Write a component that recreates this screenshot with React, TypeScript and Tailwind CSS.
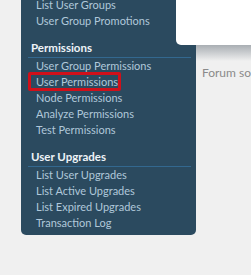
import React from "react";

const font = { fontFamily: 'Lato, "Noto Sans", sans-serif' };

function Item({ label, active }: { label: string; active?: boolean }) {
  return (
    <div className="h-[16px] leading-[16px] pl-[15px] text-[11px] text-[#b0c8da] whitespace-nowrap">
      <span className="relative">
        {active && (
          <span className="absolute left-[-8px] right-[-3px] top-[-3px] bottom-[-3px] border-[3px] border-[#d0101a] rounded-[2px]" />
        )}
        {label}
      </span>
    </div>
  );
}

function Header({ label }: { label: string }) {
  return (
    <div className="ml-[7px] mr-[5px] h-[19px] leading-[17px] pl-[3px] border-b border-[#33688f] text-[11.5px] font-bold text-[#eef3f7] whitespace-nowrap">
      {label}
    </div>
  );
}

export default function App() {
  return (
    <div className="relative w-[251px] h-[275px] bg-[#f0f0f0] overflow-hidden" style={font}>
      <div className="flex">
        <div className="ml-[21px] w-[180px] h-[235px] bg-[#2b4a5f] rounded-b-[5px] overflow-hidden">
          <div className="mt-[-3px]">
            <Item label="List User Groups" />
            <Item label="User Group Promotions" />
          </div>
          <div className="mt-[10px]">
            <Header label="Permissions" />
            <div className="mt-[0px]">
              <Item label="User Group Permissions" />
              <Item label="User Permissions" active />
              <Item label="Node Permissions" />
              <Item label="Analyze Permissions" />
              <Item label="Test Permissions" />
            </div>
          </div>
          <div className="mt-[10px]">
            <Header label="User Upgrades" />
            <div>
              <Item label="List User Upgrades" />
              <Item label="List Active Upgrades" />
              <Item label="List Expired Upgrades" />
              <Item label="Transaction Log" />
            </div>
          </div>
        </div>
        <div className="flex-1 flex flex-col">
          <div className="h-[45px]" />
          <div className="h-[16px] bg-gradient-to-b from-[#a9aeb3] to-[#f0f0f0]" />
          <div className="pl-[6px] mt-[4px] text-[12px] leading-[16px] text-[#8a8a8a] whitespace-nowrap">
            Forum so
          </div>
        </div>
      </div>
      <div className="absolute left-[176px] top-0 w-[75px] h-[45px] bg-white rounded-bl-[5px]" />
    </div>
  );
}
